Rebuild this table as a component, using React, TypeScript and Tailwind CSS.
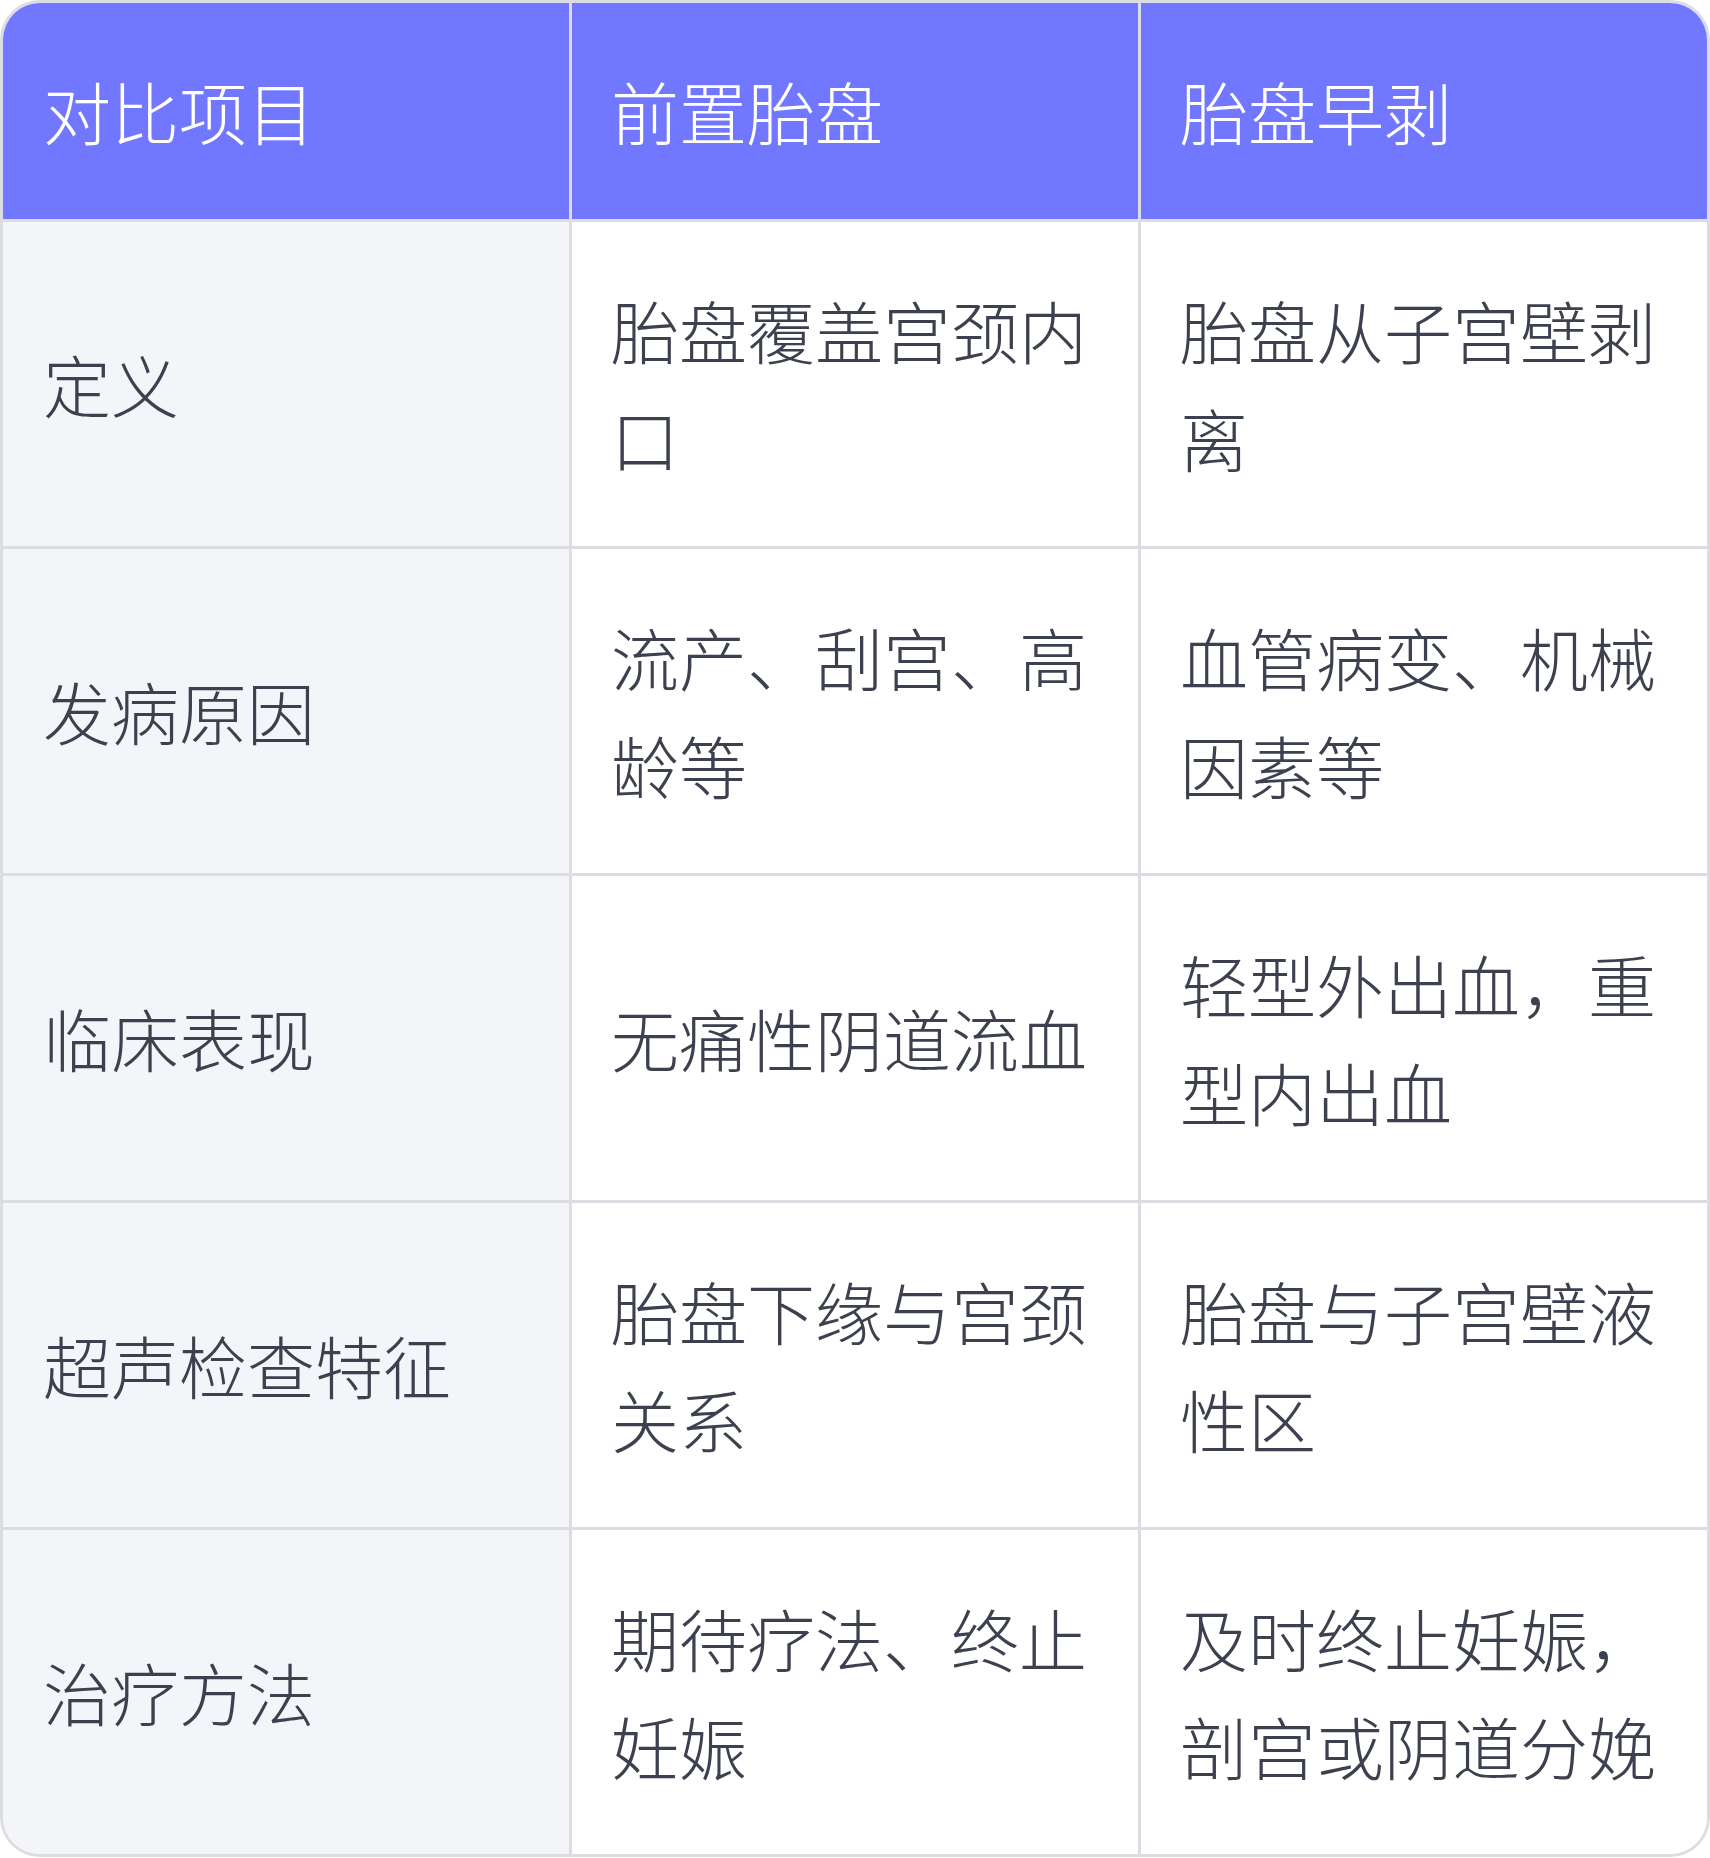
import React from "react";

const rows: [string, string, string][] = [
  ["定义", "胎盘覆盖宫颈内口", "胎盘从子宫壁剥离"],
  ["发病原因", "流产、刮宫、高龄等", "血管病变、机械因素等"],
  ["临床表现", "无痛性阴道流血", "轻型外出血，重型内出血"],
  ["超声检查特征", "胎盘下缘与宫颈关系", "胎盘与子宫壁液性区"],
  ["治疗方法", "期待疗法、终止妊娠", "及时终止妊娠，剖宫或阴道分娩"],
];

const font = {
  fontFamily: '"Noto Sans CJK SC", "Noto Sans", sans-serif',
};

export default function App() {
  return (
    <div className="w-[1710px] h-[1858px] bg-white" style={font}>
      <div className="w-[1710px] rounded-[40px] border-[3px] border-[#dcdde3] overflow-hidden">
        <div className="grid grid-cols-[566px_569px_569px] bg-[#7177ff]">
          {["对比项目", "前置胎盘", "胎盘早剥"].map((h, i) => (
            <div
              key={h}
              className={`py-[54px] text-[68px] font-light leading-[108px] text-white ${
                i > 0 ? "border-l-[3px] border-[#dcdde3] pl-[39px] pr-[38px]" : "px-[40px]"
              }`}
            >
              {h}
            </div>
          ))}
        </div>
        {rows.map((r) => (
          <div key={r[0]} className="grid grid-cols-[566px_569px_569px] border-t-[3px] border-[#dcdde3]">
            <div className="flex items-center bg-[#f4f5f9] px-[40px] py-[54px] text-[68px] font-light leading-[108px] text-[#3d414f]">
              {r[0]}
            </div>
            <div className="flex items-center bg-white border-l-[3px] border-[#dcdde3] pl-[39px] pr-[38px] py-[54px] text-[68px] font-light leading-[108px] text-[#3d414f]">
              <span>{r[1]}</span>
            </div>
            <div className="flex items-center bg-white border-l-[3px] border-[#dcdde3] pl-[39px] pr-[38px] py-[54px] text-[68px] font-light leading-[108px] text-[#3d414f]">
              <span>{r[2]}</span>
            </div>
          </div>
        ))}
      </div>
    </div>
  );
}
